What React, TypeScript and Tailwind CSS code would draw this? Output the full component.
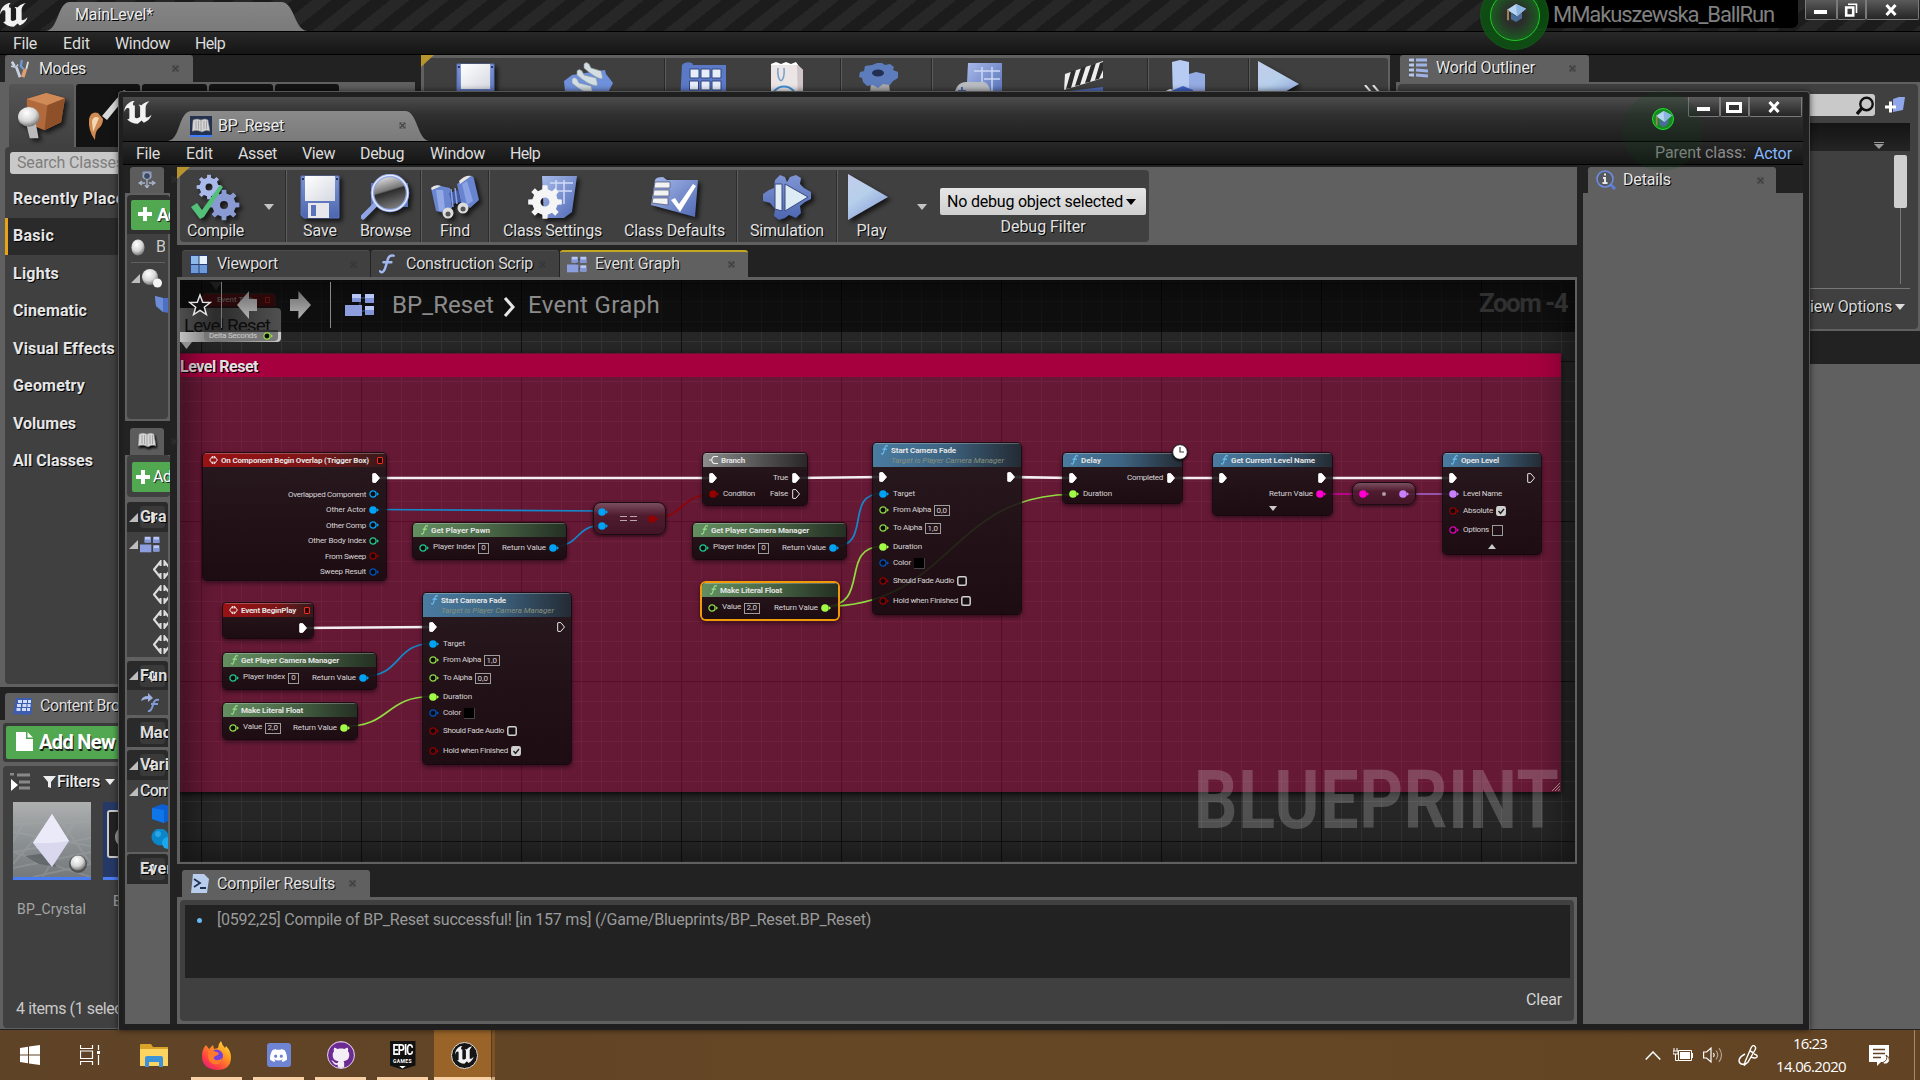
import { useLayoutEffect, useRef, type ReactNode } from "react";
import { SiDiscord, SiGithub } from "react-icons/si";

/* Text tracked so that it fills a known advance width. */
function T({ w, c = "", children }: { w: number; c?: string; children: string }) {
  const ref = useRef<HTMLSpanElement>(null);
  useLayoutEffect(() => {
    const el = ref.current;
    if (!el) return;
    el.style.letterSpacing = "0px";
    const rect = el.getBoundingClientRect().width;
    const natural = Math.abs(rect - el.offsetWidth) < 1 ? rect : el.offsetWidth;
    el.style.letterSpacing = `${(w - natural) / children.length}px`;
  }, [w, children]);
  return (
    <span ref={ref} className={`inline-block shrink-0 whitespace-pre ${c}`}>
      {children}
    </span>
  );
}

const U_PATH =
  "M19.13 13.729c-.206.997-1.126 3.557-4.06 4.942l-1.179-1.325-1.988 2a7.338 7.338 0 0 1-5.804-2.978 2.859 2.859 0 0 0 .65.123c.326.006.678-.114.678-.66v-5.394a.89.89 0 0 0-1.116-.89c-.92.212-1.656 2.509-1.656 2.509a7.304 7.304 0 0 1 2.528-5.597 7.408 7.408 0 0 1 3.73-1.721c-1.006.573-1.57 1.507-1.57 2.29 0 1.262.76 1.109.984.923v7.28a1.157 1.157 0 0 0 .148.256 1.075 1.075 0 0 0 .88.445c.76 0 1.747-.868 1.747-.868V9.172c0-.6-.452-1.324-.905-1.572 0 0 .838-.149 1.484.346a5.537 5.537 0 0 1 .387-.425c1.508-1.48 2.929-1.902 4.112-2.112 0 0-2.151 1.69-2.151 3.96 0 1.687.043 5.801.043 5.801.799.771 1.986-.342 3.059-1.441Z";

function UnrealMark({ c }: { c: string }) {
  return (
    <svg viewBox="4.6 5.2 14.8 14.3" preserveAspectRatio="none" className={c}>
      <path d={U_PATH} fill="#f2f2f2" />
    </svg>
  );
}

function Defs() {
  return (
    <svg className="absolute h-0 w-0">
      <defs>
        <linearGradient id="blue" x1="0" y1="0" x2="1" y2="1">
          <stop offset="0" stopColor="#a9bbea" />
          <stop offset="1" stopColor="#4f69b4" />
        </linearGradient>
        <linearGradient id="blueV" x1="0" y1="0" x2="0" y2="1">
          <stop offset="0" stopColor="#7f95d4" />
          <stop offset="1" stopColor="#4c66b0" />
        </linearGradient>
        <linearGradient id="pale" x1="0" y1="0" x2="0.6" y2="1">
          <stop offset="0" stopColor="#c4cdec" />
          <stop offset="0.5" stopColor="#b6cfea" />
          <stop offset="1" stopColor="#8da2dc" />
        </linearGradient>
        <linearGradient id="white" x1="0" y1="0" x2="1" y2="1">
          <stop offset="0" stopColor="#fff" />
          <stop offset="1" stopColor="#d4d8e0" />
        </linearGradient>
        <radialGradient id="ball" cx="0.4" cy="0.3" r="0.7">
          <stop offset="0" stopColor="#fff" />
          <stop offset="0.6" stopColor="#d6d6d6" />
          <stop offset="1" stopColor="#777" />
        </radialGradient>
        <linearGradient id="glass" x1="0" y1="0" x2="0.3" y2="1">
          <stop offset="0" stopColor="#fff" />
          <stop offset="0.5" stopColor="#777" />
          <stop offset="0.55" stopColor="#2d2d2d" />
          <stop offset="1" stopColor="#777" />
        </linearGradient>
        <linearGradient id="arrow" x1="0" y1="0" x2="0" y2="1">
          <stop offset="0" stopColor="#6d6d6d" />
          <stop offset="1" stopColor="#b5b5b5" />
        </linearGradient>
      </defs>
    </svg>
  );
}

/* A toothed gear outline as a path, built from its geometry. */
function gear(cx: number, cy: number, r: number, hole: number, teeth = 8) {
  let d = "";
  for (let i = 0; i < teeth; i++) {
    const a = (i / teeth) * Math.PI * 2;
    const s = (Math.PI * 2) / teeth;
    const pts: [number, number][] = [
      [a - s * 0.27, r * 0.76],
      [a - s * 0.19, r],
      [a + s * 0.19, r],
      [a + s * 0.27, r * 0.76],
    ];
    pts.forEach(([t, q], j) => {
      d += `${i + j === 0 ? "M" : "L"}${(cx + q * Math.sin(t)).toFixed(2)} ${(cy - q * Math.cos(t)).toFixed(2)}`;
    });
  }
  return `${d}ZM${cx - hole} ${cy}a${hole} ${hole} 0 1 0 ${hole * 2} 0a${hole} ${hole} 0 1 0 ${-hole * 2} 0Z`;
}

function Ico({ c, vb = "0 0 48 48", children }: { c: string; vb?: string; children: ReactNode }) {
  return (
    <svg viewBox={vb} className={`block shrink-0 ${c}`} preserveAspectRatio="none">
      {children}
    </svg>
  );
}

const shadow = "drop-shadow-[3px_3px_2px_rgba(0,0,0,0.65)]";

const Floppy = ({ c }: { c: string }) => (
  <Ico c={`${c} ${shadow}`} vb="0 0 40 44">
    <path d="M1 1h38v42H4l-3-3z" fill="url(#blueV)" stroke="#5b74ba" />
    <path d="M5 1h30v25H5z" fill="url(#white)" />
    <path d="M8 28h21v15H8z" fill="#e8e8ec" />
    <path d="M11 30h5v11h-5z" fill="#5a73b9" />
    <path d="M2 3h2v2H2zM36 3h2v2h-2z" fill="#26335c" />
  </Ico>
);
const Gears = () => (
  <Ico c={`h-[47px] w-[50px] ${shadow}`} vb="0 0 50 47">
    <path fillRule="evenodd" d={gear(18, 13, 12.5, 3.5)} fill="#a9b9ea" />
    <path fillRule="evenodd" d={gear(33, 31, 15.5, 4)} fill="#8a9ad2" />
    <path d="M0 33l6-4 5 7L29 11l3 2L13 43l-4 2z" fill="#52c078" />
  </Ico>
);
const Magnifier = () => (
  <Ico c={`h-[46px] w-[50px] ${shadow}`} vb="0 0 50 46">
    <path d="M10 9h37v24H10z" fill="#5b73ba" />
    <path d="M2 43l13-13" stroke="#8fa5e6" strokeWidth="5" strokeLinecap="round" />
    <circle cx="29" cy="19" r="17.5" fill="url(#glass)" stroke="#93a8e6" strokeWidth="3.5" />
    <circle cx="29" cy="19" r="17.7" fill="none" stroke="#e6edff" strokeWidth="1.3" />
  </Ico>
);
const Binoculars = () => (
  <Ico c={`h-[44px] w-[48px] ${shadow}`} vb="0 0 48 44">
    <path d="M0 13q5-4 10-2l9 2 2 20-8 5-8-2z" fill="#6a86d0" />
    <path d="M26 9L38 1q4-1 5 3l5 21-9 8-9-5z" fill="#6883d0" />
    <path d="M5 15l7 0 2 20-6 1z" fill="#93a9e6" />
    <path d="M31 9l5-3 6 20-6 4z" fill="#8ba3e4" />
    <path d="M18 18l9-3 3 12-9 2z" fill="#445ca4" />
    <path d="M20 14l2 18M24 13l2 16" stroke="#8fa5e4" strokeWidth="1.500" />
    <path d="M0 13q4-4 10-2l-9 4zM28 6q6-6 12-5l-11 8z" fill="#e9e6e2" />
    <circle cx="17" cy="38" r="5.500" fill="#dcdcdc" />
    <circle cx="17" cy="39" r="2.500" fill="#555" />
    <circle cx="32" cy="33" r="5.500" fill="#dcdcdc" />
    <circle cx="32" cy="34" r="2.500" fill="#555" />
  </Ico>
);
const ClassSettings = () => (
  <Ico c={`h-[44px] w-[50px] ${shadow}`} vb="0 0 50 44">
    <path d="M14 1h35l-5 36-8 6H16z" fill="url(#blue)" />
    <path d="M22 8h23M26 16h18M28 5v24M36 5v24" stroke="#cfdcf8" strokeWidth="1.500" />
    <path fillRule="evenodd" d={gear(17, 27, 17, 4.5)} fill="#f5f5f5" />
  </Ico>
);
const ClassDefaults = () => (
  <Ico c={`h-[42px] w-[47px] ${shadow}`} vb="0 0 47 42">
    <path d="M4 4q1-3 8-3l4 3h31l-3 37L0 29z" fill="url(#blue)" />
    <path d="M4 6h15v6l-16 0zM3 14h15v6L2 20zM2 22h15v7L1 27z" fill="#f3f3f3" stroke="#454f70" strokeWidth=".7" />
    <path d="M20 24l4-2 4 6L42 8l3 2-16 26z" fill="#fff" />
  </Ico>
);
const Simulation = () => (
  <Ico c={`h-[46px] w-[48px] ${shadow}`} vb="0 0 48 46">
    <path
      d="M17 1l5 2 2 5 3-5 6-2 5 3-1 6 4 4 7 4v7l-6 3-5 4 1 7-5 5-7-3-4 3-6 2-5-4 1-7-5-6-7-2v-7l6-4 5-2 1-8z"
      fill="url(#blueV)"
    />
    <path d="M12 10h7v27l-7-2z" fill="#e3edf4" stroke="#3b4b80" />
    <path d="M22 10l23 13-23 14z" fill="#dcebf4" stroke="#3b4b80" />
  </Ico>
);
const Play = ({ c }: { c: string }) => (
  <Ico c={`${c} ${shadow}`} vb="0 0 40 46">
    <path d="M0 0l40 23L0 46z" fill="url(#pale)" />
  </Ico>
);
const GraphIcon = ({ c }: { c: string }) => (
  <Ico c={c} vb="0 0 30 24">
    <path d="M8 5h14M15 5v14M15 18h9" stroke="#30406c" strokeWidth="1.500" />
    <path d="M7 1h9v8H7zM20 1h9v9h-9zM20 13h9v9h-9z" fill="#b8c6f6" />
    <path d="M0 12h17v11H0z" fill="#8c9ede" />
    <path d="M7 5h9v4H7zM20 5h9v5h-9zM20 17h9v5h-9z" fill="#8195d8" />
  </Ico>
);
const Book = ({ c }: { c: string }) => (
  <Ico c={c} vb="0 0 18 16">
    <path d="M1 2q4-2 8 0 4-2 7 0l2 12q-4-2-8 1-4-3-10-1z" fill="#d6d6d6" stroke="#777" strokeWidth=".6" />
    <path d="M9 2v13M4 3v9M6.500 3v9M12 3v9M14.500 3v9" stroke="#8b8b8b" strokeWidth=".7" />
  </Ico>
);
const Caret = ({ c = "" }: { c?: string }) => (
  <Ico c={`h-[6px] w-[10px] ${c}`} vb="0 0 10 6">
    <path d="M0 0h10L5 6z" fill="currentColor" />
  </Ico>
);
const TreeArrow = ({ c = "" }: { c?: string }) => (
  <Ico c={`h-[9px] w-[9px] ${c}`} vb="0 0 9 9">
    <path d="M9 0v9H0z" fill="#bdbdbd" />
  </Ico>
);
const TabX = ({ c = "" }: { c?: string }) => (
  <Ico c={`h-[7px] w-[7px] ${c}`} vb="0 0 7 7">
    <path d="M.5.5h6v6h-6z" fill="none" stroke="#333" strokeOpacity=".4" strokeWidth=".6" />
    <path d="M1 1l5 5M6 1L1 6" stroke="#333" strokeOpacity=".8" strokeWidth="1.300" />
  </Ico>
);
const FIcon = ({ c, color }: { c: string; color: string }) => (
  <Ico c={c} vb="0 0 16 18">
    <path
      d="M1 15.500q2 2.500 4-1.500 1.500-4 3-10 1.500-3.500 5-2.500M4 7.500h7"
      fill="none"
      stroke={color}
      strokeWidth="2.200"
      strokeLinecap="round"
    />
  </Ico>
);

function WinButtons({ restore }: { restore?: boolean }) {
  const b =
    "flex h-[20px] items-center justify-center rounded-b-[2px] border border-[#7a7a7a] border-t-0 bg-linear-to-b from-[#5b5b5b] to-[#262626]";
  return (
    <div className="flex">
      <div className={`${b} w-[32px] pr-px`}>
        <div className="mt-[4px] h-[4px] w-[13px] bg-white" />
      </div>
      <div className={`${b} w-[29px] pr-px`}>
        {restore ? (
          <Ico c="h-[14px] w-[14px]" vb="0 0 14 14">
            <path d="M4 1.200h8.500V10" fill="none" stroke="#fff" strokeWidth="1.600" />
            <path d="M2.200 4.500h7v8h-7z" fill="none" stroke="#fff" strokeWidth="2.600" />
          </Ico>
        ) : (
          <div className="mt-[1px] h-[11px] w-[16px] border-[3px] border-white bg-[#333]" />
        )}
      </div>
      <div className={`${b} w-[53px] pr-[4px]`}>
        <Ico c="h-[12px] w-[12px]" vb="0 0 12 12">
          <path d="M1.500 1l9 10M10.500 1l-9 10" stroke="#fff" strokeWidth="3" />
        </Ico>
      </div>
    </div>
  );
}

function GradCap({ c }: { c: string }) {
  return (
    <Ico c={c} vb="0 0 20 20">
      <path d="M5 9l5 4 6-4v6l-6 4-5-3z" fill="#4a6c96" />
      <path d="M10 0l10 5-9 8L1 6z" fill="#b5d4f2" />
      <path d="M10 0l10 5-9 8z" fill="#8bb5e0" />
      <path d="M2 6v11" stroke="#a08050" strokeWidth="2" />
    </Ico>
  );
}

const shade = "[text-shadow:1px_1px_0_#000]";

function MenuBar({ items, children }: { items: [string, number, string][]; children?: ReactNode }) {
  return (
    <div className="flex h-[24px] shrink-0 items-center border-y border-black bg-linear-to-b from-[#282828] to-[#151515] pt-px text-[16px] text-[#dcdcdc]">
      {items.map(([label, w, m]) => (
        <div key={label} className={m}>
          <T w={w}>{label}</T>
        </div>
      ))}
      {children}
    </div>
  );
}

/* ---------- main editor window, behind the blueprint window ---------- */

function ModesPanel() {
  const cats: [string, number][] = [
    ["Recently Placed", 121],
    ["Basic", 41],
    ["Lights", 46],
    ["Cinematic", 74],
    ["Visual Effects", 102],
    ["Geometry", 72],
    ["Volumes", 63],
    ["All Classes", 80],
  ];
  return (
    <div className="w-[415px]">
      <div className="ml-[5px] flex h-[27px] w-[188px] items-center rounded-t-[3px] bg-[#606060]">
        <Ico c="ml-[6px] h-[20px] w-[18px]" vb="0 0 20 22">
          <path d="M1 3l3 5M6 9l4 11" stroke="#c9d2e4" strokeWidth="3" fill="none" />
          <path d="M0 8l5 1 3-3" stroke="#c9d2e4" strokeWidth="1.500" fill="none" />
          <path d="M12 1l-1 7 3 3" stroke="#6e9bd8" strokeWidth="2.500" fill="none" />
          <path d="M16 11l-3 9" stroke="#e0a070" strokeWidth="4" />
          <path d="M19 3l-2 8" stroke="#ddd" strokeWidth="2" />
        </Ico>
        <T w={47} c={`ml-[10px] text-[16px] text-[#e8e8e8] ${shade}`}>Modes</T>
        <TabX c="ml-[86px]" />
      </div>
      <div className="h-[605px] bg-[#606060] pt-[2px]">
        <div className="ml-[9px] flex h-[63px] gap-[2px]">
          <div className="flex w-[65px] items-center justify-center rounded-t-[3px] bg-linear-to-b from-[#545454] to-[#404040]">
            <Ico c={`h-[48px] w-[47px] ${shadow}`} vb="0 0 48 54">
              <path d="M9 8L29 1l19 6-4 27-17 9-18-8z" fill="#b06a3c" />
              <path d="M9 8l20-7 19 6-18 8z" fill="#d08a58" />
              <path d="M30 15l18-8-4 27-17 9z" fill="#8d5028" />
              <path d="M8 34h10l3 18H12z" fill="#bbb" />
              <circle cx="11" cy="28" r="11" fill="url(#ball)" />
            </Ico>
          </div>
          <div className="w-[64px] rounded-t-[3px] bg-[#131313] pt-[5px] pl-[12px]">
            <Ico c="h-[51px] w-[42px]" vb="0 0 42 51">
              <path d="M14 27L36 1l5 3-22 27z" fill="#d8d8d8" />
              <path d="M1 30q2-8 9-6l5 6q0 6-5 10-3 3-3 11-7-9-6-21z" fill="#cf8b52" />
              <path d="M4 32q2-6 7-3l-6 14z" fill="#f3d7b5" />
            </Ico>
          </div>
          <div className="w-[65px] rounded-t-[3px] bg-[#131313]" />
          <div className="w-[64px] rounded-t-[3px] bg-[#131313]" />
          <div className="w-[64px] rounded-t-[3px] bg-[#131313]" />
        </div>
        <div className="ml-[5px] h-[537px] rounded-[4px] bg-[#404040] pt-[5px]">
          <div className="ml-[5px] h-[22px] rounded-[3px] bg-[#c9c9c9] pl-[7px] text-[16px] leading-[22px] text-[#7e7e7e]">
            <T w={107}>Search Classes</T>
          </div>
          <div className="mt-[6px] text-[16px] font-bold text-[#e6e6e6]">
            {cats.map(([n, w]) => (
              <div
                key={n}
                className={`flex h-[37.5px] items-center ${n === "Basic" ? "border-l-[3px] border-[#e8a317] bg-[#2a2a2a] pl-[5px]" : "pl-[8px]"}`}
              >
                <T w={w} c={shade}>{n}</T>
              </div>
            ))}
          </div>
        </div>
      </div>
    </div>
  );
}

function ContentBrowser() {
  return (
    <div className="mt-[6px] flex w-[415px] flex-col">
      <div className="ml-[5px] flex h-[27px] items-center rounded-t-[3px] bg-[#606060] pb-px">
        <Ico c="ml-[8px] h-[19px] w-[20px]" vb="0 0 20 19">
          <path d="M3 1h16v14l-2 3L0 17z" fill="#3f5db0" />
          <path d="M5 3h4v3H5zM10 3h4v3h-4zM15 3h3v3h-3zM4 7h4v3H4zM9.500 7h4v3h-4zM14.500 7h3v3h-3zM3.500 11h4v3h-4zM9 11h4v3H9zM14 11h3v3h-3z" fill="#cfdcf8" />
        </Ico>
        <T w={112} c={`ml-[7px] text-[16px] text-[#dedede] ${shade}`}>Content Browser</T>
      </div>
      <div className="h-[309px] bg-[#606060] pt-[3px] pl-[3px]">
        <div className="h-[39px] rounded-[3px] bg-[#3a3a3a] p-[3px]">
          <div className="flex h-[33px] items-center rounded-[2px] bg-[#52a850] pb-[2px]">
            <Ico c="ml-[10px] h-[19px] w-[17px]" vb="0 0 17 19">
              <path d="M0 0h10v7h7v12H0zM11.500 0L17 5.500h-5.500z" fill="#fff" />
            </Ico>
            <T w={76} c="ml-[6px] text-[20px] font-bold text-white [text-shadow:1px_2px_0_#222]">Add New</T>
          </div>
        </div>
        <div className="mt-[4px] flex h-[262px] flex-col rounded-[4px] bg-[#404040]">
          <div className="flex h-[31px] items-center">
            <Ico c="ml-[7px] h-[18px] w-[21px]" vb="0 0 21 18">
              <path d="M0 1h4M7 2h13M9 9h11M9 15h11" stroke="#888" strokeWidth="3" />
              <path d="M1 6l7 6-7 6z" fill="#fff" />
            </Ico>
            <Ico c="ml-[12px] h-[12px] w-[13px]" vb="0 0 13 12">
              <path d="M0 0h13L8 6v6l-3-1V6z" fill="#eee" />
            </Ico>
            <T w={43} c={`ml-[1px] text-[16px] font-medium text-[#eee] ${shade}`}>Filters</T>
            <Caret c="ml-[5px] text-[#eee]" />
          </div>
          <div className="mt-[5px] ml-[10px] flex">
            <div className="relative h-[78px] w-[78px] border-b-[3px] border-[#4b7cf0] bg-linear-to-b from-[#aeb0b0] via-[#8d9294] to-[#75797c]">
              <svg viewBox="0 0 78 75" className="h-full w-full">
                <path d="M0 22L78 20M0 30l78 14M0 50l78-14M0 66L78 50M0 50l78 25M20 75L78 62M10 22L0 40M50 22l28 40M34 22L0 62M60 22L30 75" stroke="#a5a9aa" strokeWidth="2" opacity=".35" />
                <path d="M12 54l22-3 10 14-18-3z" fill="#555b5e" opacity=".7" />
                <path d="M39 12l17 27-17 26-19-24z" fill="#d9d8ee" />
                <path d="M39 12l17 27-17 2-19 0z" fill="#ebeaf8" />
                <circle cx="65" cy="62" r="9" fill="#222" opacity=".5" />
                <circle cx="65" cy="61" r="7.500" fill="url(#ball)" />
              </svg>
            </div>
            <div className="ml-[12px] flex h-[78px] w-[78px] border-b-[3px] border-[#4b7cf0] bg-[#263865] pt-[8px] pl-[4px]">
              <div className="h-[48px] w-[60px] rounded-[3px] border-2 border-[#c8c8c8] bg-[#222]">
                <div className="mt-[14px] ml-[6px] h-[22px] w-[22px] rounded-full bg-[#999]" />
              </div>
            </div>
          </div>
          <div className="flex text-[14px] text-[#a6a6a6]">
            <T w={69} c="mt-[19px] ml-[14px]">BP_Crystal</T>
            <T w={60} c="mt-[11px] ml-[27px]">EndScreen</T>
          </div>
          <T w={133} c="mt-auto mb-[7px] ml-[13px] self-start text-[16px] text-[#c9c9c9]">4 items (1 selected)</T>
        </div>
      </div>
    </div>
  );
}

function MainToolbar() {
  const sep = "w-[2px] shrink-0 bg-[#5b5b5b] border-l border-[#2a2a2a] h-[60px]";
  return (
    <div className="ml-[6px] h-[80px] w-[969px] shrink-0 bg-[#606060] pt-[3px] pr-[2px] pl-[3px]">
      <div className="relative flex h-full rounded-[3px] bg-[#3f3f3f]">
        <div className="absolute -top-[3px] -left-[3px] h-[12px] w-[13px] bg-[#b8942f] [clip-path:polygon(0_0,100%_0,0_100%)]" />
        <Floppy c="mt-[5px] ml-[32px] h-[44px] w-[39px]" />
        <Ico c="mt-[4px] ml-[69px] h-[40px] w-[49px]" vb="0 0 49 40">
          <path d="M0 19L8 13 41 8l1 4 7 9-10 19H2z" fill="#6f90dc" />
          <path d="M20 2q2-3 5 0l2 4 10 3q2 6 1 8-7-1-18-11zM13 9q2-3 5 0l2 4 12 3q2 6 1 8-9-1-20-11zM8 17q2-3 5 0l2 4 12 3q2 6 1 8-9-1-20-11z" fill="#d3dee2" stroke="#8a989e" strokeWidth=".6" />
          <path d="M34 40q2-4 9-2v2z" fill="#c8524a" />
        </Ico>
        <div className={`ml-[51px] ${sep}`} />
        <Ico c="mt-[4px] ml-[14px] h-[40px] w-[46px]" vb="0 0 46 40">
          <path d="M2 3q3-4 10-2l1 2h33v37H0z" fill="#5c79c8" />
          <path d="M10 7h9v9h-9zM21 7h9v9h-9zM32 7h9v9h-9zM9.500 19h9v9h-9zM21 19h9v9h-9zM32 19h9v9h-9z" fill="#e8edfa" stroke="#31447e" />
        </Ico>
        <Ico c="mt-[4px] ml-[44px] h-[40px] w-[34px]" vb="0 0 34 40">
          <path d="M1 2h26l6 6v32H1z" fill="#ece5e6" />
          <path d="M1 2l5-2 5 2 5-2 5 2 5-2 2 3H1z" fill="#fff" />
          <path d="M27 3l6 5v32h-5z" fill="#cfc5c8" />
          <path d="M8 6q-1 10 3 13M14 6q1 10-3 13" fill="none" stroke="#7aa0c8" strokeWidth="1.500" />
          <circle cx="14" cy="37" r="12.500" fill="none" stroke="#3c8fd8" strokeWidth="2" />
        </Ico>
        <div className={`ml-[36px] ${sep}`} />
        <Ico c="mt-[5px] ml-[17px] h-[40px] w-[39px]" vb="0 0 39 40">
          <path d="M12 20h18l2 20H10z" fill="#a9a9a9" />
          <path d="M13 2l5-2h5l3 2 5-1 4 3-1 3 5 2v6l-5 3-3 4-7-1-5 4-5-3-6 1-4-4-1-4L0 14l1-5 4-1 1-5z" fill="#5d7cbc" />
          <ellipse cx="19" cy="10" rx="6" ry="3.500" fill="#222f50" />
        </Ico>
        <div className={`ml-[33px] ${sep}`} />
        <Ico c="mt-[4px] ml-[21px] h-[40px] w-[48px]" vb="0 0 48 40">
          <path d="M14 1h34v39H12z" fill="url(#blue)" />
          <path d="M20 9h26M30 17h16M28 5v15M38 5v24" stroke="#cbd8f6" strokeWidth="1.500" />
          <path d="M0 34q2-14 12-14l18 0q7 2 8 20H0z" fill="#b9bcc0" />
          <path d="M4 29h8M8 25v8" stroke="#4b68a8" strokeWidth="2" />
        </Ico>
        <Ico c="mt-[2px] ml-[59px] h-[40px] w-[44px]" vb="0 0 44 40">
          <path d="M4 14L42 1v17L3 30z" fill="#eee" />
          <path d="M10 11l5-1-5 18-5 1zM20 8l5-2-6 19-5 1zM30 5l5-2-6 19-5 1zM39 3l3-1v8l-4 9-4 1z" fill="#2c2c2c" />
          <path d="M0 32l42-5v13H0z" fill="#4f6bb8" />
          <path d="M4 35l34-4v9H4z" fill="#23262e" />
        </Ico>
        <div className={`ml-[42px] ${sep}`} />
        <Ico c="mt-[2px] ml-[10px] h-[40px] w-[46px]" vb="0 0 46 40">
          <path d="M13 2l8-2 9 2v38H14z" fill="#b8cbf2" />
          <path d="M30 14l7-2 9 2v26H30z" fill="#94abe4" />
          <path d="M0 34l11-5 14 4v7H0z" fill="#e8edf5" />
          <path d="M12 31l12-5 10 4v10H13z" fill="#3f62c8" />
        </Ico>
        <div className={`ml-[43px] ${sep}`} />
        <Play c="mt-[3px] ml-[8px] h-[46px] w-[41px]" />
        <Ico c="mt-[27px] ml-[65px] h-[14px] w-[18px]" vb="0 0 18 14">
          <path d="M1 0l6 7-6 7M9 0l6 7-6 7" stroke="#eee" strokeWidth="2" fill="none" />
        </Ico>
      </div>
    </div>
  );
}

function Outliner() {
  return (
    <div className="ml-[6px] flex w-[524px] shrink-0 flex-col">
      <div className="ml-[4px] flex h-[27px] w-[189px] items-center rounded-t-[3px] bg-[#606060] pb-px">
        <Ico c="ml-[9px] h-[20px] w-[19px]" vb="0 0 19 20">
          <path d="M1 0v20" stroke="#333" />
          <path d="M0 2h5M0 7h5M0 12h5M0 17h5" stroke="#b8c8e8" strokeWidth="3" />
          <path d="M7 2h11M7 7h11M7 12l12 1M7 17l12 1" stroke="#9fb4e4" strokeWidth="3" />
        </Ico>
        <T w={99} c={`ml-[8px] text-[16px] text-[#e8e8e8] ${shade}`}>World Outliner</T>
        <TabX c="ml-[34px]" />
      </div>
      <div className="h-[249px] bg-[#606060] p-[2px]">
        <div className="flex h-full flex-col rounded-[4px] bg-[#404040] pr-[8px]">
          <div className="mt-[10px] flex h-[22px] items-center justify-end">
            <div className="flex h-full w-[460px] items-center justify-end rounded-[3px] bg-[#c9c9c9] pr-px">
              <Ico c="h-[19px] w-[18px]" vb="0 0 18 19">
                <circle cx="10.500" cy="8" r="6.200" fill="none" stroke="#111" strokeWidth="2.400" />
                <path d="M6 12L1 18" stroke="#111" strokeWidth="3.400" />
              </Ico>
            </div>
            <Ico c="mr-[5px] ml-[10px] h-[18px] w-[20px]" vb="0 0 20 18">
              <path d="M8 3l6-2 6 0-2 13-10 2z" fill="#8fa6ea" />
              <path d="M0 11h11M5.500 5.500v11" stroke="#fff" strokeWidth="3" />
            </Ico>
          </div>
          <div className="mt-[7px] flex h-[28px] items-end justify-end bg-linear-to-b from-[#141414] to-[#242424] pr-[26px] pb-[2px]">
            <Ico c="h-[7px] w-[10px]" vb="0 0 10 7">
              <path d="M0 .5h10" stroke="#999" />
              <path d="M0 2h10L5 7z" fill="#999" />
            </Ico>
          </div>
          <div className="flex h-[133px] flex-col items-end pt-[4px] pr-[3px]">
            <div className="h-[53px] w-[13px] rounded-[2px] bg-[#cfcfcf]" />
            <div className="mr-[6px] h-[76px] w-px bg-[#777]" />
          </div>
          <div className="mt-[4px] h-px bg-[#777]" />
          <div className="flex h-[36px] items-center justify-end pr-[5px] text-[16px] text-[#d8d8d8]">
            <T w={92} c={shade}>View Options</T>
            <Caret c="ml-[3px] text-[#ddd]" />
          </div>
        </div>
      </div>
      <div className="mt-[33px] h-[665px] bg-[#606060]" />
    </div>
  );
}

function MainWindow() {
  return (
    <div className="flex h-[1030px] flex-col bg-[#222]">
      <div className="relative flex h-[31px] shrink-0 overflow-visible bg-[repeating-linear-gradient(141.5deg,#272727_0_12px,#1c1c1c_12px_24.3px)]">
        <UnrealMark c="mt-[3px] h-[24px] w-[28px]" />
        <div className="mt-[2px] ml-[17px] h-[29px] w-[263px] bg-linear-to-b from-[#858585] to-[#7a7a7a] pl-[30px] text-[16px] leading-[26px] text-[#ececec] [clip-path:path('M0_29C14_29_12_0_25_0H236C250_0_249_29_263_29Z')]">
          <T w={78} c={shade}>MainLevel*</T>
        </div>
        <div className="mr-[7px] ml-auto flex h-[28px] w-[260px] items-center rounded-br-[6px] bg-black pl-[15px] text-[22px] text-[#808080]">
          <T w={221}>MMakuszewska_BallRun</T>
        </div>
        <div className="mr-px">
          <WinButtons restore />
        </div>
        <div className="absolute -top-[19px] left-[1480px] z-10 flex h-[69px] w-[69px] items-center justify-center rounded-full border border-[#14551a] bg-[#0d5512]/85">
          <div className="flex h-[50px] w-[50px] items-center justify-center rounded-full border border-[#22c52c] bg-[radial-gradient(circle,#2b2f2b_30%,#0e7c16_100%)]">
            <GradCap c="mt-[-4px] ml-[2px] h-[19px] w-[20px]" />
          </div>
        </div>
      </div>
      <MenuBar items={[["File", 24, "ml-[13px]"], ["Edit", 27, "ml-[26px]"], ["Window", 55, "ml-[25px]"], ["Help", 30, "ml-[25px]"]]} />
      <div className="flex h-[975px]">
        <div className="flex flex-col">
          <ModesPanel />
          <ContentBrowser />
        </div>
        <MainToolbar />
        <Outliner />
      </div>
    </div>
  );
}

/* ---------- blueprint graph ---------- */

const BLUE = "#00a2f4";
const CYAN = "#1fc48d";
const RED = "#920000";
const NAVY = "#0050b8";
const LIME = "#a0fc46";
const PINK = "#ff00d0";
const VIOLET = "#c880ff";

type Kind = "exec" | "pin";
type End = {
  k?: Kind;
  color?: string;
  on?: boolean;
  label?: string;
  w?: number;
  box?: string;
  sw?: boolean;
  chk?: boolean;
};
type Row = { h: string; l?: End; r?: End; pad?: string };

function Pin({ e }: { e: End }) {
  if (e.k === "exec")
    return (
      <svg viewBox="0 0 8 10" className="h-[10px] w-[8px] shrink-0">
        <path d="M.7 1q0-.4.5-.4h2.600L7.500 5 3.800 9.400H1.200q-.5 0-.5-.4z" fill={e.on ? "#fff" : "none"} stroke="#fff" strokeWidth=".9" />
      </svg>
    );
  return (
    <svg viewBox="0 0 10 8" className="h-[8px] w-[10px] shrink-0">
      <circle cx="4" cy="4" r={e.on ? 3.8 : 3.1} fill={e.on ? e.color : "#0c0a0b"} stroke={e.color} strokeWidth={e.on ? 0 : 1.3} />
      <path d="M8 2.300L10 4 8 5.700z" fill={e.color} />
    </svg>
  );
}

function Check({ on }: { on: boolean }) {
  return (
    <svg viewBox="0 0 10 10" className="-ml-px h-[10px] w-[10px] shrink-0">
      <rect x=".8" y=".8" width="8.400" height="8.400" rx="1.500" fill={on ? "#d0d0d0" : "#181014"} stroke="#d0d0d0" strokeWidth="1.500" />
      {on && <path d="M2.500 5l2 2.300L8 3" fill="none" stroke="#222" strokeWidth="1.400" />}
    </svg>
  );
}

function Side({ e, right }: { e: End; right?: boolean }) {
  return (
    <div className={`flex items-center ${right ? "flex-row-reverse" : ""} ${right && e.k !== "exec" ? "gap-[3px]" : "gap-[4px]"}`}>
      <Pin e={e} />
      {e.label && e.w && (
        <div className={e.box !== undefined || e.sw || e.chk !== undefined ? "mt-[-1px]" : "mt-[0.5px]"}>
          <T w={e.w}>{e.label}</T>
        </div>
      )}
      {e.box !== undefined && (
        <div className="mt-px -ml-px flex h-[11px] min-w-[11px] items-center justify-center border border-[#9c9c9c] px-[1.5px] text-[8px]">{e.box}</div>
      )}
      {e.sw && <div className="-ml-px h-[11px] w-[11px] border-r border-b border-[#444] bg-black" />}
      {e.chk !== undefined && <Check on={e.chk} />}
    </div>
  );
}

type Style = "event" | "pure" | "call" | "flow";
const HEAD: Record<Style, string> = {
  event: "bg-linear-to-r from-[#9a1214] via-[#7d1517] via-60% to-[#35181a]",
  pure: "bg-linear-to-r from-[#638f60] via-[#4d6c4a] via-45% to-[#243023]",
  call: "bg-linear-to-r from-[#4a7ca0] via-[#3d6381] via-50% to-[#232b34]",
  flow: "bg-linear-to-r from-[#8c8c8c] via-[#5e5e5e] via-45% to-[#2b2729]",
};

type NodeProps = {
  pos: string;
  kind: Style;
  title: string;
  tw: number;
  sub?: boolean;
  rows: Row[];
  sel?: boolean;
  foot?: "down" | "up";
  children?: ReactNode;
};

function GNode({ pos, kind, title, tw, sub, rows, sel, foot, children }: NodeProps) {
  return (
    <div
      className={`absolute ${pos} rounded-[4px] text-[8px] leading-[10px] text-[#d8d4d6] ${sel ? "shadow-[0_0_0_2px_#f09a08,0_2px_5px_2px_rgba(0,0,0,0.5)]" : "shadow-[0_0_0_1px_rgba(10,5,8,0.7),0_2px_4px_1px_rgba(0,0,0,0.5)]"}`}
    >
      <div className="flex h-full flex-col overflow-hidden rounded-[4px] bg-linear-to-b from-[#21191d]/90 to-[#150b0e]/90">
        <div className={`flex shrink-0 border-t border-white/25 ${sub ? "h-[24px]" : "h-[14px]"} ${HEAD[kind]}`}>
          <div className="mt-px ml-[6px] w-[12px]">
            {kind === "event" && (
              <Ico c="h-[10px] w-[9px]" vb="0 0 10 10">
                <path d="M4.200 1L.8 5l3.400 4M5.800 1L9.200 5 5.800 9M4.200 1v2.500M4.200 9V6.500M5.800 1v2.500M5.800 9V6.500" fill="none" stroke="#e3d7d7" strokeWidth="1.100" />
              </Ico>
            )}
            {kind === "flow" && (
              <Ico c="h-[10px] w-[9px]" vb="0 0 10 10">
                <path d="M10 1.500H6Q3.500 1.500 3 5q.5 3.500 3 3.500h4M0 5h3" fill="none" stroke="#eee" strokeWidth="1.200" />
              </Ico>
            )}
            {kind === "pure" && <FIcon c="ml-[2px] h-[10px] w-[8px]" color="#96e08c" />}
            {kind === "call" && <FIcon c="ml-[2px] h-[10px] w-[8px]" color="#68c0f4" />}
          </div>
          <div className="mt-[1.5px] flex flex-col items-start">
            <T w={tw} c="font-bold text-[#e4e4e4]">{title}</T>
            {sub && <T w={113} c="text-[#87907c] italic">Target is Player Camera Manager</T>}
          </div>
          {kind === "event" && <div className="mt-[3px] mr-[3px] ml-auto h-[7px] w-[6px] rounded-[1px] border-[1.5px] border-[#f02b20] bg-[#300]" />}
        </div>
        <div className={sub ? "h-px" : "h-[2px]"} />
        {rows.map((r, i) => (
          <div key={i} className={`flex shrink-0 items-center justify-between pl-[6px] ${r.pad ?? "pr-[8px]"} ${r.h}`}>
            {r.l ? <Side e={r.l} /> : <span />}
            {r.r && <Side e={r.r} right />}
          </div>
        ))}
        {foot && (
          <Caret c={`mx-auto mt-[4px] h-[5px]! w-[8px]! text-[#c9c9c9] ${foot === "up" ? "rotate-180" : ""}`} />
        )}
      </div>
      {children}
    </div>
  );
}

const exec = (on = true): End => ({ k: "exec", on });

const fadeRows = (a: string, b: string, out: boolean, hold: boolean): Row[] => [
  { h: "h-[18px]", pad: "pr-[6px]", l: exec(), r: exec(out) },
  { h: "h-[15px]", l: { color: BLUE, on: true, label: "Target", w: 22 } },
  { h: "h-[18px]", l: { color: "#8fd644", label: "From Alpha", w: 38, box: a } },
  { h: "h-[18px]", l: { color: "#8fd644", label: "To Alpha", w: 29, box: b } },
  { h: "h-[19px]", l: { color: LIME, on: true, label: "Duration", w: 29 } },
  { h: "h-[14px]", l: { color: NAVY, label: "Color", w: 18, sw: true } },
  { h: "h-[22px]", l: { color: RED, label: "Should Fade Audio", w: 61, chk: false } },
  { h: "h-[18px]", l: { color: RED, label: "Hold when Finished", w: 65, chk: hold } },
];
const playerRows: Row[] = [
  {
    h: "h-[17px]",
    pad: "pr-[7px]",
    l: { color: CYAN, label: "Player Index", w: 42, box: "0" },
    r: { color: BLUE, on: true, label: "Return Value", w: 44 },
  },
];
const floatRows: Row[] = [
  {
    h: "h-[17px]",
    pad: "pr-[7px]",
    l: { color: "#8fd644", label: "Value", w: 19, box: "2,0" },
    r: { color: LIME, on: true, label: "Return Value", w: 44 },
  },
];
const outRow = (label: string, w: number, color: string, on = false): Row => ({
  h: "h-[15.5px]",
  pad: "pr-[7px]",
  r: { color, label, w, on },
});

const compact =
  "absolute rounded-[8px] border border-[#1c0d13] bg-linear-to-b from-[#7d5464]/90 via-[#4d1c2e]/90 via-40% to-[#3f1424]/90 shadow-[0_1px_3px_1px_rgba(0,0,0,0.45)]";

function Graph() {
  return (
    <div className="relative h-[582px] w-[1395px] overflow-hidden bg-[#262626]">
      <div className="absolute inset-0 bg-[linear-gradient(to_right,#101010_1px,transparent_1px),linear-gradient(to_bottom,#101010_1px,transparent_1px),linear-gradient(to_right,#333_1px,transparent_1px),linear-gradient(to_bottom,#333_1px,transparent_1px)] bg-size-[160px_160px,160px_160px,20px_20px,20px_20px] bg-position-[21px_81px,21px_81px,1px_1px,1px_1px]" />

      {/* comment region */}
      <div className="absolute top-[73px] left-[-10px] h-[439px] w-[1391px] bg-[rgb(180,11,73)]/45 shadow-[0_2px_6px_rgba(0,0,0,0.8)]">
        <div className="h-[24px] border-t border-[#6d1034] bg-[#a6003f] pl-[10px] text-[16px] leading-[26px] font-bold text-[#e6dfe1]">
          <T w={78} c={shade}>Level Reset</T>
        </div>
        <Ico c="absolute right-[1px] bottom-[1px] h-[8px] w-[8px]" vb="0 0 8 8">
          <path d="M0 8l8-8M3 8l5-5M6 8l2-2" stroke="#b9909c" strokeWidth="1" />
        </Ico>
      </div>
      <div className="absolute inset-0 shadow-[inset_0_0_34px_6px_rgba(0,0,0,0.5)]" />

      {/* comment bubble and tick event half hidden by the title strip */}
      <div className="absolute top-[13px] left-[22px] h-[48px] w-[74px] rounded-[4px] border border-[#333] bg-[#3a2020]">
        <div className="flex h-[12px] items-center justify-between bg-[#6d1517] px-[5px] text-[8px] text-[#ccc]">
          <span className="pl-[9px]">Event Tick</span>
          <div className="h-[6px] w-[5px] border border-[#f02b20]" />
        </div>
      </div>
      <div className="absolute top-[28px] left-[-6px] h-[34px] w-[107px] rounded-[4px] bg-linear-to-r from-[#cfcfcf] via-[#6f6f6f] via-40% to-[#c8c8c8] pl-[10px] text-[19px] leading-[35px] text-[#222]">
        <T w={86}>Level Reset</T>
      </div>
      <div className="absolute top-[50px] left-[24px] flex h-[11px] w-[74px] items-center justify-between rounded-b-[4px] bg-[#777] px-[5px] text-[8px] text-[#ccc]">
        <T w={48}>Delta Seconds</T>
        <Pin e={{ color: "#8fd644" }} />
      </div>
      <Ico c="absolute top-[62px] left-[1px] h-[7px] w-[11px]" vb="0 0 10 7">
        <path d="M0 0h10L5 7z" fill="#909090" />
      </Ico>
      <Ico c="absolute top-[2px] left-[30px] h-[8px] w-[12px]" vb="0 0 10 7">
        <path d="M0 0h10L5 7z" fill="#484848" />
      </Ico>

      {/* title strip */}
      <div className="absolute inset-x-0 top-0 flex h-[52px] items-center bg-black/60 pb-[2px] text-[#8b8b8b]">
        <Ico c="ml-[8px] h-[24px] w-[24px]" vb="0 0 24 24">
          <path d="M12 2l2.700 7.200 7.600.3-6 4.700 2.100 7.400-6.400-4.300-6.400 4.300 2.100-7.400-6-4.700 7.600-.3z" fill="#111" stroke="#e4e4e4" strokeWidth="1.500" />
        </Ico>
        <div className="ml-[9px] h-[46px] w-px bg-[#777]" />
        <Ico c="ml-[15px] h-[28px] w-[20px]" vb="0 0 20 28">
          <path d="M0 14L12 0v8h8v12h-8v8z" fill="url(#arrow)" />
        </Ico>
        <Ico c="ml-[33px] h-[28px] w-[21px]" vb="0 0 20 28">
          <path d="M20 14L8 0v8H0v12h8v8z" fill="url(#arrow)" />
        </Ico>
        <div className="ml-[19px] h-[46px] w-px bg-[#888]" />
        <GraphIcon c="ml-[14px] h-[24px] w-[30px]" />
        <T w={102} c="ml-[17px] text-[24px]">BP_Reset</T>
        <Ico c="mt-[4px] ml-[9px] h-[20px] w-[13px]" vb="0 0 13 20">
          <path d="M2 1l8 9-8 9" fill="none" stroke="#e6e6e6" strokeWidth="3" />
        </Ico>
        <T w={132} c="ml-[12px] text-[24px]">Event Graph</T>
        <T w={88} c="mt-[-4px] mr-[8px] ml-auto text-[26px] font-bold text-[#303030]">Zoom -4</T>
      </div>

      {/* wires */}
      <svg viewBox="180 280 1395 582" className="absolute inset-0 h-full w-full" fill="none">
        <g stroke="#f4eef0" strokeWidth="2.600">
          <path d="M376 478H712M796 478L882 477M1010 477L1072 478M1170 478h52M1322 478h130M302 628L432 627" />
        </g>
        <g strokeWidth="1.700">
          <path d="M374 509.500L602 511M553 546.500C582 546 574 525.500 602 525.500M363 676.500C402 676.500 394 643.500 432 643.500M834 546.500C873 546.500 843 493.500 882 493.500" stroke="#1488cc" />
          <path d="M652 518.500C684 518.500 680 494.500 712 494.500" stroke="#8c0508" />
          <path d="M344 726.500C392 726.500 384 696.500 432 696.500M824 606.500C872 606.500 838 546.500 882 546.500M824 606.500C950 606.500 950 494.500 1072 494.500" stroke="#90dc40" />
          <path d="M1320 494h43" stroke="#d400a8" />
          <path d="M1404 494h49" stroke="#a868d4" />
        </g>
      </svg>

      <GNode pos="left-[23px] top-[173px] h-[127px] w-[183px]" kind="event" title="On Component Begin Overlap (Trigger Box)" tw={148}
        rows={[
          { h: "h-[17.5px]", pad: "pr-[6px]", r: exec() },
          outRow("Overlapped Component", 78, BLUE),
          outRow("Other Actor", 40, BLUE, true),
          outRow("Other Comp", 40, BLUE),
          outRow("Other Body Index", 58, CYAN),
          outRow("From Sweep", 41, RED),
          outRow("Sweep Result", 46, NAVY),
        ]} />
      <GNode pos="left-[233px] top-[243px] h-[36px] w-[153px]" kind="pure" title="Get Player Pawn" tw={59} rows={playerRows} />
      <div className={`${compact} top-[222px] left-[413px] flex h-[33px] w-[73px] items-center justify-between px-[4px]`}>
        <div className="flex flex-col gap-[6px]">
          <Pin e={{ color: BLUE, on: true }} />
          <Pin e={{ color: BLUE, on: true }} />
        </div>
        <span className="flex gap-[3px]">
          <i className="h-[5px] w-[7px] border-y border-[#b9a5ad]" />
          <i className="h-[5px] w-[7px] border-y border-[#b9a5ad]" />
        </span>
        <div className="pr-[3px]">
          <Pin e={{ color: RED, on: true }} />
        </div>
      </div>
      <GNode pos="left-[43px] top-[323px] h-[35px] w-[90px]" kind="event" title="Event BeginPlay" tw={55}
        rows={[{ h: "h-[17px]", pad: "pr-[6px]", r: exec() }]} />
      <GNode pos="left-[43px] top-[373px] h-[36px] w-[153px]" kind="pure" title="Get Player Camera Manager" tw={98} rows={playerRows} />
      <GNode pos="left-[43px] top-[423px] h-[36px] w-[134px]" kind="pure" title="Make Literal Float" tw={62} rows={floatRows} />
      <GNode pos="left-[243px] top-[313px] h-[171px] w-[148px]" kind="call" title="Start Camera Fade" tw={65} sub rows={fadeRows("1,0", "0,0", false, true)} />
      <GNode pos="left-[523px] top-[173px] h-[52px] w-[104px]" kind="flow" title="Branch" tw={24}
        rows={[
          { h: "h-[17px]", pad: "pr-[7px]", l: exec(), r: { k: "exec", on: true, label: "True", w: 15 } },
          { h: "h-[16px]", pad: "pr-[7px]", l: { color: RED, on: true, label: "Condition", w: 32 }, r: { k: "exec", label: "False", w: 18 } },
        ]} />
      <GNode pos="left-[513px] top-[243px] h-[36px] w-[153px]" kind="pure" title="Get Player Camera Manager" tw={98} rows={playerRows} />
      <GNode pos="left-[522px] top-[303px] h-[36px] w-[136px]" kind="pure" title="Make Literal Float" tw={62} sel rows={floatRows} />
      <GNode pos="left-[693px] top-[163px] h-[171px] w-[148px]" kind="call" title="Start Camera Fade" tw={65} sub rows={fadeRows("0,0", "1,0", true, false)} />
      <GNode pos="left-[883px] top-[173px] h-[50px] w-[119px]" kind="call" title="Delay" tw={20}
        rows={[
          { h: "h-[17px]", pad: "pr-[7px]", l: exec(), r: { k: "exec", on: true, label: "Completed", w: 36 } },
          { h: "h-[16px]", l: { color: LIME, on: true, label: "Duration", w: 29 } },
        ]}>
        <Ico c="absolute -top-[9px] -right-[6px] h-[16px] w-[16px] drop-shadow-[0_1px_1px_#000]" vb="0 0 16 16">
          <circle cx="8" cy="8" r="7.300" fill="#fff" stroke="#222" strokeWidth=".8" />
          <path d="M8 3v5h4" fill="none" stroke="#444" strokeWidth="1.200" />
        </Ico>
      </GNode>
      <GNode pos="left-[1033px] top-[173px] h-[62px] w-[119px]" kind="call" title="Get Current Level Name" tw={84} foot="down"
        rows={[
          { h: "h-[17px]", pad: "pr-[6px]", l: exec(), r: exec() },
          { h: "h-[16px]", pad: "pr-[6px]", r: { color: PINK, on: true, label: "Return Value", w: 44 } },
        ]} />
      <div className={`${compact} top-[202px] left-[1172px] flex h-[23px] w-[64px] items-center justify-between pr-[6px] pl-[6px]`}>
        <Pin e={{ color: PINK, on: true }} />
        <i className="h-[4px] w-[4px] rounded-full bg-[#b09aa4]" />
        <Pin e={{ color: VIOLET, on: true }} />
      </div>
      <GNode pos="left-[1263px] top-[173px] h-[101px] w-[98px]" kind="call" title="Open Level" tw={38} foot="up"
        rows={[
          { h: "h-[17px]", pad: "pr-[6px]", l: exec(), r: exec(false) },
          { h: "h-[16px]", l: { color: VIOLET, on: true, label: "Level Name", w: 39 } },
          { h: "h-[18px]", l: { color: RED, label: "Absolute", w: 30, chk: true } },
          { h: "h-[20px]", l: { color: "#e000b8", label: "Options", w: 26, box: "" } },
        ]} />

      <div className="absolute top-[471px] left-[1014px] origin-left scale-x-[0.83] text-[82px] leading-[98px] font-bold text-white/20">
        <T w={440}>BLUEPRINT</T>
      </div>
    </div>
  );
}

/* ---------- blueprint editor window ---------- */

function ToolItem({ icon, label, w, m }: { icon: ReactNode; label: string; w: number; m: string }) {
  return (
    <div className={`flex h-full shrink-0 flex-col items-center ${m}`}>
      <div className="flex h-[51px] items-center pt-[3px]">{icon}</div>
      <T w={w} c={`leading-[20px] ${shade}`}>{label}</T>
    </div>
  );
}

function Toolbar() {
  const sep = "h-[72px] w-[2px] shrink-0 bg-[#5d5d5d] border-l border-[#2d2d2d]";
  return (
    <div className="h-[78px] bg-[#606060] pt-[3px] pb-[3px] pl-[3px]">
      <div className="relative flex h-[72px] w-[969px] rounded-[4px] bg-[#404040] text-[16px] text-[#e2e2e2]">
        <div className="absolute -top-[3px] -left-[3px] h-[12px] w-[13px] bg-[#b8942f] [clip-path:polygon(0_0,100%_0,0_100%)]" />
        <ToolItem icon={<Gears />} label="Compile" w={57} m="ml-[7px]" />
        <Caret c="mt-[34px] ml-[20px] text-[#c4c4c4]" />
        <div className={`ml-[11px] ${sep}`} />
        <ToolItem icon={<Floppy c="h-[44px] w-[40px]" />} label="Save" w={34} m="ml-[13px]" />
        <ToolItem icon={<Magnifier />} label="Browse" w={51} m="ml-[20px]" />
        <div className={`ml-[9px] ${sep}`} />
        <ToolItem icon={<Binoculars />} label="Find" w={30} m="ml-[9px]" />
        <div className={`ml-[9px] ${sep}`} />
        <ToolItem icon={<ClassSettings />} label="Class Settings" w={99} m="ml-[13px]" />
        <ToolItem icon={<ClassDefaults />} label="Class Defaults" w={101} m="ml-[22px]" />
        <div className={`ml-[11px] ${sep}`} />
        <ToolItem icon={<Simulation />} label="Simulation" w={74} m="ml-[12px]" />
        <div className={`ml-[12px] ${sep}`} />
        <ToolItem icon={<Play c="-ml-[7px] h-[46px] w-[40px]" />} label="Play" w={30} m="ml-[17px]" />
        <Caret c="mt-[34px] ml-[29px] text-[#c4c4c4]" />
        <div className="mt-[18px] ml-[13px] flex flex-col items-center">
          <div className="flex h-[27px] w-[206px] items-center rounded-[2px] bg-linear-to-b from-[#e6e6e6] to-[#cfcfcf] pl-[7px] text-black">
            <T w={176}>No debug object selected</T>
            <Caret c="ml-[3px]" />
          </div>
          <T w={85} c={`leading-[24px] ${shade}`}>Debug Filter</T>
        </div>
      </div>
    </div>
  );
}

function DocTab({ icon, label, w, active, gap, lm }: { icon: ReactNode; label: string; w: number; active?: boolean; gap: string; lm: string }) {
  return (
    <div
      className={`flex h-[27px] w-[188px] shrink-0 items-center rounded-t-[3px] text-[16px] text-[#dedede] ${active ? "border-t-2 border-[#c2a822] bg-[#606060] pb-px" : "border-t border-[#4c4c4c] bg-[#404040]"}`}
    >
      {icon}
      <div className={lm}>
        <T w={w} c={shade}>{label}</T>
      </div>
      <TabX c={gap} />
    </div>
  );
}

const AddGlyph = () => (
  <Ico c="h-[14px] w-[14px]" vb="0 0 14 14">
    <path d="M7 0v14M0 7h14" stroke="#fff" strokeWidth="4" />
  </Ico>
);

function Section({ label, w, h, arrow }: { label: string; w: number; h: string; arrow?: boolean }) {
  return (
    <div className={`relative flex ${h} shrink-0 items-center overflow-hidden rounded-t-[3px] bg-[#2a2a2a] pl-[2px] text-[16px] font-bold text-[#ddd]`}>
      <TreeArrow c={arrow ? "" : "invisible"} />
      <div className="absolute top-[4px] left-[13px] flex h-[22px] w-[25px] items-center justify-center rounded-[3px] bg-[#3a3a3a]">
        <Ico c="h-[13px] w-[11px]" vb="0 0 11 13">
          <path d="M5.500 1v11M1 7h9" stroke="#eee" strokeWidth="2.500" />
        </Ico>
      </div>
      <T w={w} c={`relative ml-[2px] ${shade}`}>{label}</T>
    </div>
  );
}

function SideColumn() {
  return (
    <div className="ml-[2px] flex w-[45px] shrink-0 flex-col overflow-visible">
      <div className="relative mt-[2px] ml-[5px] flex h-[26px] w-[34px] items-center justify-center rounded-t-[3px] bg-[#5c5c5c] pb-[2px]">
        <Ico c="h-[18px] w-[18px]" vb="0 0 18 18">
          <path d="M5 2h8v6H5z" fill="#7084ac" stroke="#8fa0c4" />
          <circle cx="9" cy="6" r="3.500" fill="#3c4a66" stroke="#a9b5cc" />
          <path d="M9 10v7M2 13h5M11 13h5M4 11l-3 2 3 2M14 11l3 2-3 2M7 15l2 3 2-3" fill="none" stroke="#a9b5cc" strokeWidth="1.300" />
        </Ico>
        <TabX c="absolute top-[9px] left-[41px]" />
      </div>
      <div className="flex h-[228px] flex-col overflow-hidden bg-[#606060] pt-[2px] pb-[2px] pl-[2px]">
        <div className="h-[39px] overflow-hidden rounded-t-[4px] bg-[#303030] pt-[5px] pl-[4px]">
          <div className="flex h-[30px] w-[90px] items-center rounded-[2px] bg-[#52a850] pb-[2px] pl-[7px] text-[18px] font-bold text-white">
            <AddGlyph />
            <T w={115} c="ml-[5px] [text-shadow:1px_1px_0_#222]">Add Component</T>
          </div>
        </div>
        <div className="mr-[2px] flex-1 overflow-hidden rounded-b-[4px] bg-[#404040] pl-[4px]">
          <div className="flex h-[26px] items-center text-[16px] text-[#ccc]">
            <Ico c="h-[17px] w-[14px]" vb="0 0 17 17">
              <circle cx="8.500" cy="8.500" r="8" fill="url(#ball)" />
            </Ico>
            <div className="ml-[11px] w-[9px] shrink-0 overflow-hidden">
              <T w={94}>BP_Reset(self)</T>
            </div>
          </div>
          <div className="mt-[2px] mr-[3px] h-px bg-[#606060]" />
          <div className="mt-[6px] flex items-center gap-[2px]">
            <TreeArrow />
            <Ico c="h-[19px] w-[20px]" vb="0 0 20 19">
              <circle cx="8" cy="8" r="8" fill="url(#ball)" />
              <circle cx="15.500" cy="14" r="4.500" fill="#f4f4f4" />
            </Ico>
          </div>
          <Ico c="mt-[7px] ml-[24px] h-[18px] w-[16px]" vb="0 0 16 18">
            <path d="M0 1l8 2h8v15l-8-1-7-6z" fill="#4d70c4" />
            <path d="M0 1l8 2v14l-7-6z" fill="#6f8cd6" />
          </Ico>
        </div>
      </div>
      <div className="relative mt-[7px] ml-[5px] flex h-[27px] w-[34px] items-center justify-center rounded-t-[3px] bg-[#5c5c5c] pb-[4px]">
        <Book c="h-[16px] w-[18px] drop-shadow-[1px_2px_1px_#000]" />
        <TabX c="absolute top-[10px] left-[41px]" />
      </div>
      <div className="flex flex-1 flex-col overflow-hidden bg-[#606060] pr-[2px] pl-[2px]">
        <div className="-mr-[2px] h-[42px] overflow-hidden rounded-[4px] bg-[#404040] pt-[7px] pl-[5px]">
          <div className="flex h-[30px] w-[90px] items-center rounded-[2px] bg-[#52a850] pb-px pl-[4px] text-[16px] text-white">
            <AddGlyph />
            <T w={62} c="ml-[3px] [text-shadow:1px_1px_0_#222]">Add New</T>
          </div>
        </div>
        <div className="h-[5px]" />
        <Section label="Graphs" w={56} h="h-[30px]" arrow />
        <div className="h-[125px] shrink-0 overflow-hidden bg-[#404040]">
          <div className="flex h-[25px] items-center pl-[2px]">
            <TreeArrow />
            <GraphIcon c="ml-[2px] h-[17px] w-[20px]" />
          </div>
          {[0, 1, 2, 3].map((i) => (
            <div key={i} className="flex h-[25px] items-center pl-[26px]">
              <Ico c="h-[19px] w-[19px]" vb="0 0 19 19">
                <path d="M7.500 6V1.500L1 9.500l6.500 8V13M11.500 6V1.500L18 9.500l-6.500 8V13" fill="none" stroke="#ddd" strokeWidth="2.100" />
              </Ico>
            </div>
          ))}
        </div>
        <div className="h-[4px] shrink-0" />
        <Section label="Functions" w={74} h="h-[29px]" arrow />
        <div className="flex h-[25px] shrink-0 items-center overflow-hidden bg-[#404040] pl-[13px]">
          <Ico c="h-[19px] w-[20px]" vb="0 0 20 19">
            <path d="M1 8q1-5 7-5V0l5 5-5 4V6Q4 6 1 8z" fill="#9eb2e0" />
            <path d="M8 18q3 1 5-6 1-6 6-5M11 11h7" fill="none" stroke="#7f9ad8" strokeWidth="2" />
          </Ico>
        </div>
        <div className="h-[3px] shrink-0" />
        <Section label="Macros" w={54} h="h-[29px]" />
        <div className="h-[3px] shrink-0" />
        <Section label="Variables" w={68} h="h-[30px]" arrow />
        <div className="h-[72px] shrink-0 overflow-hidden bg-[#404040]">
          <div className="flex h-[22px] items-center pl-[2px] text-[16px] font-medium text-[#ddd]">
            <TreeArrow />
            <T w={84} c={`ml-[2px] ${shade}`}>Components</T>
          </div>
          <Ico c="mt-[2px] ml-[24px] h-[19px] w-[22px]" vb="0 0 22 19">
            <path d="M1 4l10-4 10 3v12l-8 4-12-4z" fill="#0c5fd0" />
            <path d="M1 4l12 2v13L1 15z" fill="#0f76ea" />
          </Ico>
          <Ico c="mt-[6px] ml-[24px] h-[20px] w-[22px]" vb="0 0 22 20">
            <circle cx="9" cy="8" r="8.500" fill="#0b86c8" />
            <circle cx="7" cy="5" r="3" fill="#2aa6e4" />
            <circle cx="17" cy="14" r="6" fill="#19a8ee" />
          </Ico>
        </div>
        <div className="h-[2px] shrink-0" />
        <Section label="Event Dispatchers" w={136} h="h-[30px]" />
      </div>
    </div>
  );
}

function BlueprintWindow() {
  return (
    <div className="absolute top-[91px] left-[118px] flex h-[939px] w-[1692px] flex-col rounded-t-[4px] border-t border-r border-l border-[#555] bg-[#1f1f1f] pt-[5px] pr-[6px] pb-[6px] pl-[4px] shadow-[0_0_6px_rgba(0,0,0,0.6)]">
      <div className="relative flex h-[44px] shrink-0 bg-linear-to-b from-[#4c4c4c] via-[#303030] via-40% to-[#1e1e1e]">
        <UnrealMark c="mt-[4px] ml-[1px] h-[23px] w-[28px]" />
        <div className="mt-[14px] ml-[16px] flex h-[30px] w-[262px] items-center bg-linear-to-b from-[#8a8a8a] to-[#7a7a7a] text-[16px] text-[#ececec] [clip-path:path('M0_30C13_28_10_0_24_0H237C250_0_249_30_262_30Z')]">
          <div className="ml-[22px] flex h-[21px] w-[22px] items-center justify-center border-b-2 border-[#3f7dff] bg-[#233250]">
            <Book c="h-[15px] w-[18px]" />
          </div>
          <T w={66} c={`mb-px ml-[6px] ${shade}`}>BP_Reset</T>
          <TabX c="mb-[2px] ml-[115px]" />
        </div>
        <div className="mr-[1px] ml-auto">
          <WinButtons />
        </div>
        <div className="absolute top-[-6px] left-[1499px] h-[80px] w-[80px] rounded-full bg-[#0d4a12]/15" />
        <div className="absolute top-[11px] left-[1529px] flex h-[22px] w-[22px] items-center justify-center rounded-full border-[1.5px] border-[#1fe02b] bg-[#178a22]">
          <GradCap c="h-[17px] w-[17px]" />
        </div>
      </div>
      <MenuBar
        items={[
          ["File", 24, "ml-[13px]"],
          ["Edit", 27, "ml-[26px]"],
          ["Asset", 39, "ml-[25px]"],
          ["View", 33, "ml-[25px]"],
          ["Debug", 44, "ml-[25px]"],
          ["Window", 55, "ml-[26px]"],
          ["Help", 30, "ml-[25px]"],
        ]}
      >
        <T w={91} c="mt-[-1px] ml-auto text-[#8a8a8a]">Parent class:</T>
        <T w={38} c="mr-[11px] ml-[8px] text-[#86b9ff]">Actor</T>
      </MenuBar>
      <div className="flex min-h-0 flex-1 bg-[#222]">
        <SideColumn />
        <div className="ml-[7px] flex w-[1400px] shrink-0 flex-col pt-[2px]">
          <Toolbar />
          <div className="mt-[5px] ml-[5px] flex gap-px">
            <DocTab label="Viewport" w={61} lm="ml-[9px]" gap="ml-[72px]"
              icon={
                <Ico c="ml-[8px] h-[19px] w-[18px]" vb="0 0 18 19">
                  <path d="M0 0h18v19H0z" fill="#2a3f70" />
                  <path d="M1 1h7.500v8H1z" fill="#8cb8ea" />
                  <path d="M9.500 1H17v8H9.500z" fill="#e8f2fb" />
                  <path d="M1 10h7.500v8H1zM9.500 10H17v8H9.500z" fill="#6e9ad8" />
                </Ico>
              }
            />
            <DocTab label="Construction Scrip" w={127} lm="ml-[9px]" gap="ml-[6px]"
              icon={<FIcon c="ml-[8px] h-[20px] w-[18px]" color="#a3b8f2" />}
            />
            <DocTab label="Event Graph" w={85} active lm="ml-[8px]" gap="ml-[48px]"
              icon={<GraphIcon c="ml-[7px] h-[17px] w-[20px]" />}
            />
          </div>
          <div className="h-[587px] shrink-0 border-t-[3px] border-r-2 border-b-2 border-l-[3px] border-[#606060]">
            <Graph />
          </div>
          <div className="mt-[6px] ml-[5px] flex h-[27px] w-[188px] shrink-0 items-center rounded-t-[3px] bg-[#606060] text-[16px] text-[#e2e2e2]">
            <Ico c="ml-[9px] h-[19px] w-[18px]" vb="0 0 18 19">
              <path d="M2 0h11l5 5-2 14H0z" fill="#b9cdec" />
              <path d="M3 5l6 4-6 4M9 14h6" fill="none" stroke="#233250" strokeWidth="1.800" />
            </Ico>
            <T w={118} c={`ml-[8px] ${shade}`}>Compiler Results</T>
            <TabX c="ml-[14px]" />
          </div>
          <div className="flex-1 bg-[#606060] p-[3px]">
            <div className="flex h-full flex-col rounded-[4px] bg-[#404040] pt-[5px] pr-[4px] pl-[5px]">
              <div className="flex h-[73px] items-start bg-[#222] pt-[5px] pl-[12px] text-[16px] leading-[20px] text-[#9a9a9a]">
                <span className="mt-[8px] h-[5px] w-[5px] rounded-full bg-[#6ab8f4]" />
                <T w={654} c="ml-[15px]">[0592,25] Compile of BP_Reset successful! [in 157 ms] (/Game/Blueprints/BP_Reset.BP_Reset)</T>
              </div>
              <T w={36} c="mt-[10px] mr-[8px] self-end text-[16px] text-[#d4d4d4]">Clear</T>
            </div>
          </div>
        </div>
        <div className="ml-[6px] flex flex-1 flex-col pt-[2px]">
          <div className="ml-[5px] flex h-[26px] w-[188px] items-center rounded-t-[3px] bg-[#606060] text-[16px] text-[#e8e8e8]">
            <Ico c="ml-[8px] h-[20px] w-[20px]" vb="0 0 20 20">
              <path d="M13 13l6 6" stroke="#5b7ed8" strokeWidth="3" />
              <circle cx="9" cy="9" r="8" fill="#55585f" stroke="#6d8be0" strokeWidth="1.600" />
              <path d="M9 3.500v2M7 8h2v5M6.500 13h5" stroke="#e6e6e6" strokeWidth="2" fill="none" />
            </Ico>
            <T w={48} c={`ml-[7px] ${shade}`}>Details</T>
            <TabX c="ml-[86px]" />
          </div>
          <div className="flex-1 bg-[#606060]" />
        </div>
      </div>
    </div>
  );
}

/* ---------- Windows taskbar ---------- */

function Taskbar() {
  const cell = "flex h-full shrink-0 items-center justify-center";
  const run = "border-b-[3px] border-[#f9d1a6] pt-[3px]";
  return (
    <div className="flex h-[50px] items-center bg-linear-to-r from-[#5f4327] via-[#664725] to-[#624424]">
      <div className={`${cell} w-[60px]`}>
        <Ico c="h-[20px] w-[20px]" vb="0 0 20 20">
          <path d="M0 3l8-1.200v7.700H0zM9 1.600L20 0v9.500H9zM0 10.500h8v7.700L0 17zM9 10.500h11V20L9 18.400z" fill="#fff" />
        </Ico>
      </div>
      <div className={`${cell} w-[60px]`}>
        <Ico c="h-[20px] w-[20px]" vb="0 0 20 20">
          <path d="M.5 0v3.500h12V0M.5 20v-3.500h12V20M.5 6h12v7.500H.5zM18.500 0v5M18.500 10v10" fill="none" stroke="#fff" strokeWidth="1.200" />
          <path d="M17 6h3v3h-3z" fill="#fff" />
        </Ico>
      </div>
      <div className={`${cell} w-[68px]`}>
        <Ico c="h-[23px] w-[28px]" vb="0 0 28 23">
          <path d="M0 1q0-1 1-1h10l2 3h15v19H0z" fill="#d9a32a" />
          <path d="M0 5h28v17H0z" fill="#fcd462" />
          <path d="M5 23V14q0-2 2-2h14q2 0 2 2v9h-4v-5H9v5z" fill="#3d93d8" />
        </Ico>
      </div>
      <div className={`${cell} ml-[3px] w-[51px] ${run}`}>
        <Ico c="h-[29px] w-[29px]" vb="0 0 29 29">
          <defs>
            <linearGradient id="fox" x1="1" y1="0" x2="0.200" y2="1">
              <stop offset="0" stopColor="#fff04a" />
              <stop offset="0.400" stopColor="#ff9a1f" />
              <stop offset="0.800" stopColor="#ff3b46" />
              <stop offset="1" stopColor="#e0208a" />
            </linearGradient>
          </defs>
          <path d="M4 4l3 4 4-4 1 4 4-1q0-4 3-7 1 4 4 7l1-2q5 5 5 11 0 13-14 13Q0 28 0 15 0 8 4 4z" fill="url(#fox)" />
          <circle cx="14.500" cy="15" r="6.500" fill="#7341dc" />
          <path d="M6 10q5-2 8 1 4 0 2 3-5 1-4 4 4 3 8-1-2 8-9 6-6-2-5-13z" fill="#ff7a2a" />
        </Ico>
      </div>
      <div className={`${cell} ml-[11px] w-[51px] ${run}`}>
        <div className="flex h-[24px] w-[24px] items-center justify-center rounded-[3px] bg-[#6f85d4]">
          <SiDiscord className="h-[17px] w-[17px] text-white" />
        </div>
      </div>
      <div className={`${cell} ml-[11px] w-[51px] ${run}`}>
        <div className="h-[28px] w-[28px] overflow-hidden rounded-full border border-[#e2cdea] bg-[#6b2b92]">
          <SiGithub className="h-[26px] w-[26px] rounded-full bg-[#f3eef6] text-[#6b2b92]" />
        </div>
      </div>
      <div className={`${cell} ml-[11px] w-[51px] ${run}`}>
        <div className="flex h-[29px] w-[26px] flex-col items-center bg-[#111] pt-[2px] [clip-path:polygon(0_0,100%_0,100%_86%,50%_100%,0_86%)]">
          <div className="origin-top scale-y-[1.35] text-[11px] leading-[11px] font-bold text-white">
            <T w={20}>EPIC</T>
          </div>
          <div className="mt-[5px] text-[5px] leading-[5px] font-bold text-white">
            <T w={19}>GAMES</T>
          </div>
          <div className="mt-[2px] h-[3px] w-[8px] bg-white [clip-path:polygon(0_0,100%_0,50%_100%)]" />
        </div>
      </div>
      <div className={`${cell} ml-[6px] w-[57px] bg-[#9a6429] ${run}`}>
        <div className="ml-[3px] flex h-[27px] w-[27px] items-center justify-center rounded-full border border-[#ddd] bg-[#161616]">
          <UnrealMark c="h-[18px] w-[19px]" />
        </div>
      </div>
      <div className="h-full w-[4px] border-b-[3px] border-l border-[#5a3c1d] border-b-[#cda77f] bg-[#7c5327]" />
      <div className="mr-0 ml-auto flex h-full items-center text-white">
        <Ico c="h-[9px] w-[16px]" vb="0 0 16 9">
          <path d="M.7 8.500L8 1l7.300 7.500" fill="none" stroke="#fff" strokeWidth="1.500" />
        </Ico>
        <Ico c="ml-[12px] h-[14px] w-[20px]" vb="0 0 20 14">
          <path d="M5.500 2.500h13v10h-13zM19.500 5v5M1 0v3M4 0v3M0 3h5v3H0zM2.500 6v6.500h3" fill="none" stroke="#fff" />
          <path d="M7 4h10v7H7z" fill="#fff" />
        </Ico>
        <Ico c="ml-[10px] h-[18px] w-[20px]" vb="0 0 20 18">
          <path d="M.6 6h3L8 2v14l-4.400-4H.6z" fill="none" stroke="#fff" strokeWidth="1.200" />
          <path d="M10.500 7q1.500 2 0 4" fill="none" stroke="#fff" strokeWidth="1.200" />
          <path d="M13 4.500q3.500 4.500 0 9M16 2q5 7 0 14" fill="none" stroke="#b5a28e" strokeWidth="1.200" />
        </Ico>
        <Ico c="ml-[15px] h-[21px] w-[20px]" vb="0 0 20 21">
          <path d="M7 17L13 3q1.500-3.500 3.500-2t.5 4L10 17l-3.500 3zM12 6l4 2M7 9q-6 3-6 7 1 4 5 3M13 12q5 2 6 0t-3-3" fill="none" stroke="#fff" strokeWidth="1.400" />
        </Ico>
        <div className="ml-[18px] flex w-[70px] flex-col items-center font-['Open_Sans','Noto_Sans',sans-serif] text-[15px] leading-[23px]">
          <T w={34} c="mr-[2px]">16:23</T>
          <T w={70}>14.06.2020</T>
        </div>
        <Ico c="ml-[23px] h-[21px] w-[21px]" vb="0 0 21 21">
          <path d="M0 0h20v17h-8l-4 4v-4H0z" fill="#fff" />
          <path d="M4 4.500h12M4 8.500h12M4 12.500h8" stroke="#634526" strokeWidth="1.300" />
          <path d="M17 10q3 5-4 8 5 3 7.500-2 .5-4-3.500-6z" fill="#fff" stroke="#634526" />
        </Ico>
        <div className="mr-[5px] ml-[24px] h-full w-px bg-[#a08c74]" />
      </div>
    </div>
  );
}

export default function App() {
  return (
    <div className="relative h-[1080px] w-[1920px] overflow-hidden bg-[#222] font-['Roboto',sans-serif]">
      <Defs />
      <MainWindow />
      <Taskbar />
      <BlueprintWindow />
    </div>
  );
}
